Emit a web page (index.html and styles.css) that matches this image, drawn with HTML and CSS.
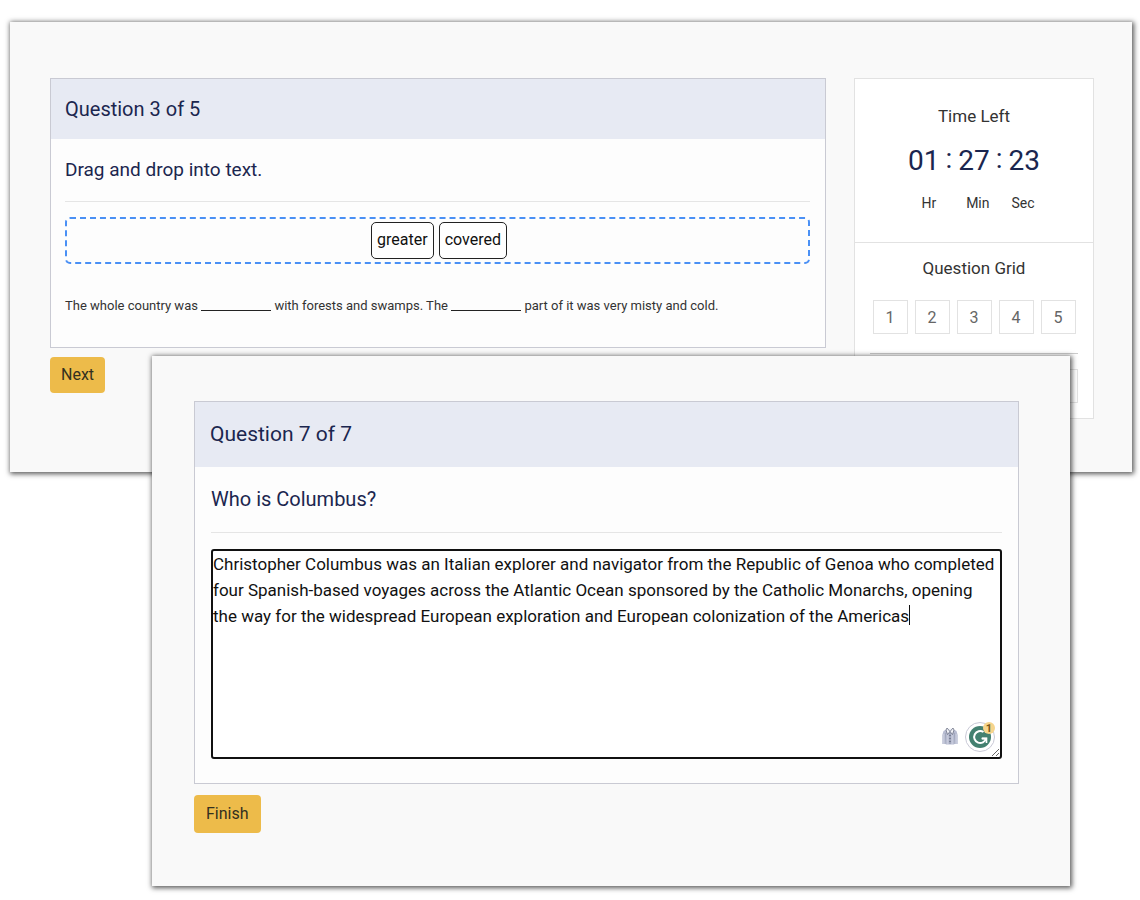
FILE: index.html
```html
<!DOCTYPE html>
<html lang="en">

<head>
  <meta charset="UTF-8">
  <meta name="viewport" content="width=device-width, initial-scale=1.0">
  <title>Quiz</title>
  <link rel="stylesheet" href="styles.css">
</head>

<body>
  <div class="window window-back">
    <div class="main">
      <div class="card">
        <h2 class="card-title">Question 3 of 5</h2>
        <div class="card-body">
          <h3 class="question">Drag and drop into text.</h3>
          <div class="word-bank">
            <button type="button" class="word">greater</button>
            <button type="button" class="word">covered</button>
          </div>
          <p class="sentence">The whole country was <span class="blank"></span> with forests and swamps. The <span
              class="blank"></span> part of it was very misty and cold.</p>
        </div>
      </div>
      <button type="button" class="btn">Next</button>
    </div>
    <div class="sidebar">
      <div class="timer">
        <h4>Time Left</h4>
        <div class="clock">
          <span>01</span>
          <span class="colon">:</span>
          <span>27</span>
          <span class="colon">:</span>
          <span>23</span>
        </div>
        <div class="units">
          <span class="hours">Hr</span>
          <span>Min</span>
          <span>Sec</span>
        </div>
      </div>
      <div class="grid">
        <h4>Question Grid</h4>
        <div class="numbers">
          <button type="button">1</button>
          <button type="button">2</button>
          <button type="button">3</button>
          <button type="button">4</button>
          <button type="button">5</button>
        </div>
        <div class="legend">
          <div class="legend-box"></div>
        </div>
      </div>
    </div>
  </div>

  <div class="window window-front">
    <div class="card">
      <h2 class="card-title">Question 7 of 7</h2>
      <div class="card-body">
        <h3 class="question"><label for="answer">Who is Columbus?</label></h3>
        <div class="answer">
          <textarea id="answer" spellcheck="false">Christopher Columbus was an Italian explorer and navigator from the Republic of Genoa who completed four Spanish-based voyages across the Atlantic Ocean sponsored by the Catholic Monarchs, opening the way for the widespread European exploration and European colonization of the Americas</textarea>
          <span class="caret"></span>
          <div class="tools">
            <!-- shirt -->
            <svg width="16" height="18" viewBox="0 0 16 18">
              <path d="M5 2 1.500 4 .3 8v9h2.900V9l.6 8.500h8.400L12.800 9v8h2.900V8L14.500 4 11 2z" fill="#b7bcd1" />
              <path d="M1.800 7v10M5.800 8v9M10.200 8v9M14.200 7v10" stroke="#cdd1e0" stroke-width="1" />
              <path d="M3.500 6v11M12.500 6v11" stroke="#9298b0" stroke-width=".6" />
              <path d="M5.500 1.500h5L8 5z" fill="#eef0f7" />
              <path d="M5 1 8 4.500 5.500 7.500 4 3zM11 1 8 4.500 10.500 7.500 12 3z" fill="#f1f2f8" stroke="#6c7184" stroke-width=".8" />
              <path d="M8 5v12" stroke="#8c92a8" stroke-width="1" />
              <path d="M7.500 8.500h1M7.500 11.500h1M7.500 14.500h1" stroke="#4f5468" stroke-width="1" />
            </svg>
            <!-- writing assistant -->
            <svg width="32" height="32" viewBox="0 0 32 32">
              <circle cx="15" cy="17" r="14.500" fill="#fff" stroke="#c9c9d6" />
              <circle cx="15" cy="17" r="11" fill="#438070" />
              <path d="M18.500 12A6 6 0 1 0 21 18.500H17" fill="none" stroke="#fff" stroke-width="2" />
              <path d="M16.500 18.500H21.500V23" fill="none" stroke="#fff" stroke-width="1.600" />
              <circle cx="24" cy="8" r="6" fill="#f6d58c" />
              <text x="24" y="12" class="count">1</text>
            </svg>
          </div>
        </div>
      </div>
    </div>
    <button type="button" class="btn">Finish</button>
  </div>
</body>

</html>
```

FILE: styles.css
```css
* {
  box-sizing: border-box;
}

body {
  font-family: Roboto, sans-serif;
  margin: 0;
  padding: 22px 8px 14px 10px;
  background-color: #fff;
  color: #333;
}

h2,
h3,
h4,
p {
  margin: 0;
  font-weight: 400;
}

button,
textarea {
  font-family: inherit;
}

.window {
  position: relative;
  background: #f9f9f9;
  box-shadow: 1px 1px 5px 1px rgba(0, 0, 0, 0.65);
}

.window-back {
  display: flex;
  align-items: flex-start;
  gap: 28px;
  height: 450px;
  padding: 56px 38px 0 40px;
}

.window-front {
  height: 530px;
  margin: -116px 62px 0 142px;
  padding: 45px 51px 0 42px;
}

.main {
  flex: 1;
}

.card {
  background: #fdfdfd;
  border: 1px solid #c9cad3;
}

.card-title {
  padding: 0 14px;
  background: #e7eaf3;
  color: #1b264f;
  font-size: 20px;
  line-height: 60px;
}

.card-body {
  padding: 0 15px 0 14px;
}

.question {
  border-bottom: 1px solid #e5e5e5;
  color: #1b264f;
  font-size: 19px;
  line-height: 62px;
}

.word-bank {
  display: flex;
  justify-content: center;
  gap: 5px;
  margin-top: 15px;
  padding: 3px 3px 3px 6px;
  border: 2px dashed #4a90f5;
  border-radius: 5px;
}

.word {
  height: 37px;
  padding: 0 5px 2px;
  background: #fff;
  border: 1px solid #222;
  border-radius: 5px;
  color: #111;
  font-size: 16px;
}

.sentence {
  padding: 32px 0 31px;
  font-size: 13px;
  line-height: 20px;
}

.blank {
  display: inline-block;
  width: 70px;
  height: 1px;
  background: #222;
  vertical-align: -1px;
}

.btn {
  display: block;
  height: 36px;
  margin-top: 9px;
  padding: 0 11px 2px;
  background: #edbb4a;
  border: 0;
  border-radius: 4px;
  color: #33301f;
  font-size: 16px;
}

.sidebar {
  width: 240px;
  background: #fff;
  border: 1px solid #e2e2e2;
  text-align: center;
}

.sidebar h4 {
  font-size: 17px;
  line-height: 24px;
}

.timer {
  height: 164px;
  padding-top: 25px;
  border-bottom: 1px solid #e2e2e2;
}

.clock {
  display: flex;
  justify-content: center;
  gap: 6px;
  margin-top: 16px;
  color: #1b264f;
  font-size: 28px;
  line-height: 34px;
}

.clock .colon {
  line-height: 30px;
}

.units {
  display: flex;
  justify-content: center;
  gap: 22px;
  margin-top: 15px;
  padding-left: 8px;
  font-size: 14px;
  line-height: 20px;
}

.units .hours {
  margin-right: 8px;
}

.grid {
  padding: 13px 15px 15px;
}

.numbers {
  display: flex;
  justify-content: center;
  gap: 7px;
  margin: 20px 0 19px;
}

.numbers button {
  width: 35px;
  height: 34px;
  padding: 0;
  background: #fff;
  border: 1px solid #e2e2e2;
  color: #666;
  font-size: 16px;
}

.legend {
  padding-top: 15px;
  border-top: 1px solid #ccc;
}

.legend-box {
  height: 34px;
  border: 1px solid #e2e2e2;
}

.window-front .card-title {
  padding: 0 15px;
  font-size: 21px;
  line-height: 65px;
}

.window-front .card-body {
  padding: 0 16px 24px;
}

.window-front .question {
  font-size: 20px;
  line-height: 65px;
}

.window-front .btn {
  height: 38px;
  margin-top: 11px;
  padding: 0 12px 2px;
}

.answer {
  position: relative;
  margin-top: 16px;
}

textarea {
  display: block;
  width: 100%;
  height: 210px;
  padding: 0;
  background: #fff;
  border: 2px solid #111;
  border-radius: 3px;
  outline: 0;
  color: #111;
  font-size: 17px;
  line-height: 26px;
}

/* text cursor after the last word */
.caret {
  position: absolute;
  top: 56px;
  left: 698px;
  width: 1px;
  height: 20px;
  background: #111;
}

.tools {
  position: absolute;
  right: 5px;
  bottom: 7px;
  display: flex;
  align-items: center;
  gap: 7px;
}

.count {
  fill: #7a5a1c;
  font-size: 11px;
  font-weight: 700;
  text-anchor: middle;
}
```
